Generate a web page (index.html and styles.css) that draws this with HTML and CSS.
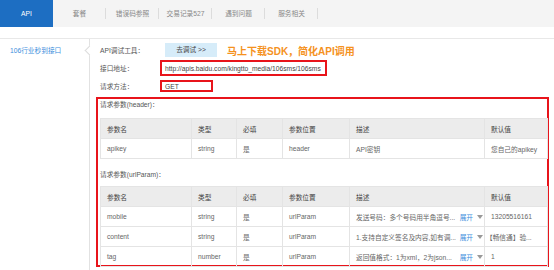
FILE: index.html
```html
<!DOCTYPE html>
<html lang="zh-CN">
<head>
<meta charset="utf-8">
<title>API</title>
<link rel="stylesheet" href="styles.css">
</head>
<body>
<div class="nav">
  <div class="tab active">API</div>
  <div class="tab">套餐</div>
  <div class="tab">错误码参照</div>
  <div class="tab">交易记录527</div>
  <div class="tab">遇到问题</div>
  <div class="tab">服务相关</div>
</div>
<div class="main">
  <div class="side">
    <div class="side-item">106行业秒到接口</div>
  </div>
  <div class="content">
    <div class="row r1">
      <span class="label">API调试工具：</span>
      <span class="btn">去调试 &gt;&gt;</span>
      <span class="promo">马上下载SDK，简化API调用</span>
    </div>
    <div class="row r2">
      <span class="label">接口地址：</span>
      <span class="mark url">http://apis.baidu.com/kingtto_media/106sms/106sms</span>
    </div>
    <div class="row r3">
      <span class="label">请求方法：</span>
      <span class="mark get">GET</span>
    </div>
    <div class="params">
      <div class="ptitle">请求参数(header)：</div>
      <table class="ptable">
        <colgroup>
          <col class="c1"><col class="c2"><col class="c3"><col class="c4"><col class="c5"><col class="c6">
        </colgroup>
        <thead>
          <tr><th>参数名</th><th>类型</th><th>必填</th><th>参数位置</th><th>描述</th><th>默认值</th></tr>
        </thead>
        <tbody>
          <tr><td>apikey</td><td>string</td><td>是</td><td>header</td><td>API密钥</td><td>您自己的apikey</td></tr>
        </tbody>
      </table>
      <div class="ptitle second">请求参数(urlParam)：</div>
      <table class="ptable">
        <colgroup>
          <col class="c1"><col class="c2"><col class="c3"><col class="c4"><col class="c5"><col class="c6">
        </colgroup>
        <thead>
          <tr><th>参数名</th><th>类型</th><th>必填</th><th>参数位置</th><th>描述</th><th>默认值</th></tr>
        </thead>
        <tbody>
          <tr><td>mobile</td><td>string</td><td>是</td><td>urlParam</td>
            <td><div class="desc"><span class="dtext">发送号码：多个号码用半角逗号...</span><span class="more">展开<svg class="caret" width="6" height="4" viewBox="0 0 6 4"><path d="M0 0H6L3 4Z" fill="#999"/></svg></span></div></td>
            <td>13205516161</td></tr>
          <tr><td>content</td><td>string</td><td>是</td><td>urlParam</td>
            <td><div class="desc"><span class="dtext">1.支持自定义签名及内容,如有调...</span><span class="more">展开<svg class="caret" width="6" height="4" viewBox="0 0 6 4"><path d="M0 0H6L3 4Z" fill="#999"/></svg></span></div></td>
            <td class="bracket">【畅信通】验...</td></tr>
          <tr><td>tag</td><td>number</td><td>是</td><td>urlParam</td>
            <td><div class="desc"><span class="dtext">返回值格式：1为xml，2为json...</span><span class="more">展开<svg class="caret" width="6" height="4" viewBox="0 0 6 4"><path d="M0 0H6L3 4Z" fill="#999"/></svg></span></div></td>
            <td>1</td></tr>
        </tbody>
      </table>
    </div>
  </div>
</div>
</body>
</html>
```
FILE: styles.css
```css
* { box-sizing: border-box; }
html, body { margin: 0; padding: 0; background: #fff; }
body {
  font-family: "Liberation Sans", "Noto Sans CJK SC", sans-serif;
  font-size: 6.7px;
  color: #555;
  overflow: hidden;
}
.nav {
  display: flex;
  height: 27px;
  background: #f4f4f4;
}
.tab {
  width: 53px;
  line-height: 27px;
  text-align: center;
  color: #888;
  background: linear-gradient(#dcdcdc, #dcdcdc) right 8px / 1px 11px no-repeat;
}
.tab.active {
  background: #1d6ec2;
  color: #fff;
}
.main {
  display: flex;
  margin-top: 11px;
  border-top: 1px solid #e8e8e8;
  height: 240px;
}
.side {
  position: relative;
  width: 90px;
  border-right: 1px solid #e2e2e2;
}
.side::after {
  content: "";
  position: absolute;
  right: -3.5px;
  top: 8px;
  width: 6px;
  height: 6px;
  background: #fff;
  border-left: 1px solid #dcdcdc;
  border-bottom: 1px solid #dcdcdc;
  transform: rotate(45deg);
}
.side-item {
  padding: 7px 0 0 10px;
  line-height: 9px;
  color: #3b8ddc;
}
.content {
  flex: 1;
  padding: 4px 0 0 10px;
}
.row {
  display: flex;
  align-items: center;
}
.r1 { height: 14px; }
.r2 { height: 16px; margin-top: 3px; }
.r3 { height: 12px; margin-top: 4px; }
.label {
  width: 60px;
  color: #555;
}
.btn {
  width: 52px;
  height: 14px;
  margin-left: 5px;
  background: #d6ecf9;
  color: #444;
  text-align: center;
  line-height: 14px;
}
.promo {
  margin-left: 10px;
  font-size: 10px;
  font-weight: bold;
  color: #f5921e;
}
.mark {
  border: 2px solid #e8141b;
  padding-left: 3px;
  color: #444;
  display: flex;
  align-items: center;
  white-space: nowrap;
}
.url { width: 167px; height: 16px; }
.get { width: 53px; height: 12px; }
.params {
  margin: 5px 0 0 -4px;
  width: 453px;
  height: 170px;
  border: 2px solid #e8141b;
  padding-left: 2px;
}
.ptitle {
  line-height: 11px;
  color: #555;
}
.ptitle.second { margin-top: 10px; }
.ptable {
  width: 447px;
  table-layout: fixed;
  border-collapse: collapse;
  margin-top: 8px;
}
.ptitle.second + .ptable { margin-top: 6px; }
.c1 { width: 91px; }
.c2 { width: 45px; }
.c3 { width: 46px; }
.c4 { width: 67px; }
.c5 { width: 135px; }
.c6 { width: 63px; }
.ptable th, .ptable td {
  border: 1px solid #e4e4e4;
  padding: 0 0 0 6px;
  height: 20px;
  text-align: left;
  font-weight: normal;
  white-space: nowrap;
  overflow: hidden;
}
.ptable th {
  background: #ececec;
  color: #444;
}
.ptable td { color: #666; }
.ptable td.bracket { padding-left: 1px; }
.desc {
  display: flex;
  align-items: center;
  padding-right: 1px;
}
.dtext { color: #666; }
.more {
  margin-left: auto;
  color: #3b8ddc;
  display: flex;
  align-items: center;
}
.caret { margin-left: 4px; }
```
